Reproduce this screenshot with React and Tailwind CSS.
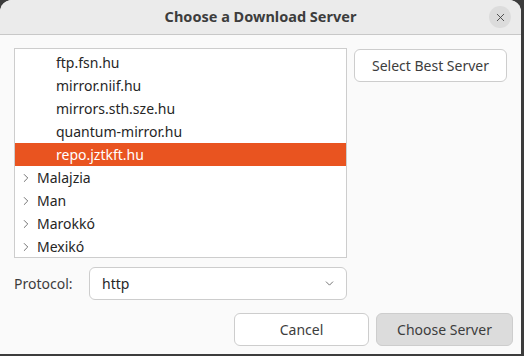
import { ChevronRight, ChevronDown, X } from "lucide-react";

const servers = ["ftp.fsn.hu", "mirror.niif.hu", "mirrors.sth.sze.hu", "quantum-mirror.hu", "repo.jztkft.hu"];
const countries = ["Malajzia", "Man", "Marokkó", "Mexikó"];

export default function App() {
    return (
        <div className="w-[524px] h-[356px] bg-[#3c3c3c] overflow-hidden" style={{ fontFamily: '"Noto Sans", "Open Sans", sans-serif' }}>
            <div className="w-[521px] h-[354px] bg-[#fafafa] rounded-t-[12px] overflow-hidden flex flex-col">
                {/* title bar */}
                <div className="h-[35px] shrink-0 bg-[#ebebeb] border-b border-[#c8c8c8] flex items-center justify-center relative">
                    <span className="text-[14.5px] font-bold text-[#3d3d3d]">Choose a Download Server</span>
                    <button className="absolute right-[10px] top-[6px] w-[22px] h-[22px] rounded-full bg-[#dcdcdc] flex items-center justify-center text-[#3d3d3d]">
                        <X size={13} strokeWidth={1.6} />
                    </button>
                </div>

                <div className="flex-1 px-[14px] pt-[13px] flex flex-col">
                    <div className="flex gap-[7px]">
                        <div className="w-[333px] h-[210px] bg-white border border-[#cdcdcd] overflow-hidden flex flex-col">
                            <div className="mt-[2px]">
                                {servers.map((s, i) => (
                                    <div
                                        key={s}
                                        className={
                                            i === 4
                                                ? "h-[23px] flex items-center pl-[41px] text-[14px] bg-[#e95420] text-white"
                                                : "h-[23px] flex items-center pl-[41px] text-[14px] text-[#262626]"
                                        }
                                    >
                                        {s}
                                    </div>
                                ))}
                                {countries.map((c) => (
                                    <div key={c} className="h-[23px] flex items-center pl-[4px] text-[14px] text-[#262626]">
                                        <ChevronRight size={14} strokeWidth={1.4} className="text-[#555] mr-[4px]" />
                                        {c}
                                    </div>
                                ))}
                            </div>
                        </div>
                        <div>
                            <button className="w-[153px] h-[33px] mt-[1px] bg-white border border-[#cdcdcd] rounded-[6px] text-[14px] text-[#3d3d3d]">
                                Select Best Server
                            </button>
                        </div>
                    </div>

                    <div className="flex items-center mt-[9px] w-[333px]">
                        <span className="w-[75px] text-[14px] text-[#3d3d3d]">Protocol:</span>
                        <div className="flex-1 h-[33px] bg-white border border-[#cdcdcd] rounded-[6px] flex items-center justify-between pl-[12px] pr-[10px]">
                            <span className="text-[14px] text-[#262626]">http</span>
                            <ChevronDown size={13} strokeWidth={1.5} className="text-[#555]" />
                        </div>
                    </div>

                    <div className="flex justify-end gap-[7px] mt-[13px] -mr-[6px]">
                        <button className="w-[135px] h-[33px] bg-white border border-[#cdcdcd] rounded-[6px] text-[14px] text-[#3d3d3d]">
                            Cancel
                        </button>
                        <button className="w-[137px] h-[33px] bg-[#dcdcdc] border border-[#cdcdcd] rounded-[6px] text-[14px] text-[#3d3d3d]">
                            Choose Server
                        </button>
                    </div>
                </div>
            </div>
        </div>
    );
}
